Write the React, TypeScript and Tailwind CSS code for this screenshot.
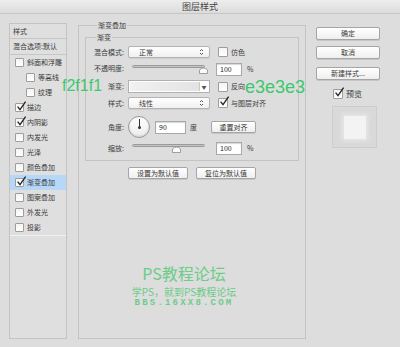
import React from "react";

function Check({ checked = false, box = "w-[9px] h-[9px]" }: { checked?: boolean; box?: string }) {
  return (
    <span className={`relative inline-block ${box} shrink-0 rounded-[1px] border border-[#9d9d9d] bg-gradient-to-b from-[#f4f4f4] to-white`}>
      {checked && (
        <svg className="absolute -top-[3px] left-0" width="11" height="11" viewBox="0 0 11 11">
          <path d="M1.6 5.6 L4 8.6 L9.6 0.6" stroke="#222" strokeWidth="1.3" fill="none" />
        </svg>
      )}
    </span>
  );
}

function Updown() {
  return (
    <svg width="5" height="8" viewBox="0 0 5 8" className="shrink-0">
      <path d="M1 3 L2.5 1.5 L4 3 M1 5 L2.5 6.5 L4 5" stroke="#444" strokeWidth="0.9" fill="none" />
    </svg>
  );
}

function Select({ value }: { value: string }) {
  return (
    <div className="flex h-[12px] w-[82px] items-center justify-between rounded-[2px] border border-[#b3b3b3] bg-gradient-to-b from-white to-[#f0f0f0] pl-[10px] pr-[5px] shadow-[0_1px_0_#cfcfcf]">
      <span className="leading-none">{value}</span>
      <Updown />
    </div>
  );
}

function Thumb() {
  return (
    <svg width="9" height="8" viewBox="0 0 9 8" className="absolute top-[0px]">
      <path d="M0.5 7.5 L0.5 4 Q4.5 0 8.5 4 L8.5 7.5 Z" fill="#fafafa" stroke="#8c8c8c" strokeWidth="0.8" />
    </svg>
  );
}

function Slider({ pos }: { pos: string }) {
  return (
    <div className="relative h-[13px] w-[82px] pl-[4px]">
      <div className="mt-[2px] h-[3px] w-[73px] rounded-full border border-[#9a9a9a] bg-[#c4c4c4]" />
      <div className={`absolute top-[1px] ${pos}`}>
        <Thumb />
      </div>
    </div>
  );
}

function Field({ value, w = "w-[26px]" }: { value: string; w?: string }) {
  return (
    <div className={`flex h-[13px] ${w} items-center border border-[#a9a9a9] bg-white pl-[3px] text-[7px] leading-none text-[#222] shadow-[inset_0_1px_1px_#d8d8d8]`}>
      {value}
    </div>
  );
}

function Btn({ label, w }: { label: string; w: string }) {
  return (
    <div className={`flex ${w} h-[12px] items-center justify-center rounded-[2px] border border-[#a5a5a5] bg-gradient-to-b from-white to-[#efefef] text-[7px] leading-none text-[#333] shadow-[0_1px_0_#c6c6c6]`}>
      {label}
    </div>
  );
}

const items: { name: string; checked?: boolean; indent?: boolean; active?: boolean }[] = [
  { name: "斜面和浮雕" },
  { name: "等高线", indent: true },
  { name: "纹理", indent: true },
  { name: "描边", checked: true },
  { name: "内阴影", checked: true },
  { name: "内发光" },
  { name: "光泽" },
  { name: "颜色叠加" },
  { name: "渐变叠加", checked: true, active: true },
  { name: "图案叠加" },
  { name: "外发光" },
  { name: "投影" },
];

export default function App() {
  return (
    <div className="relative h-[347px] w-[400px] overflow-hidden bg-[#dddddd] font-['Noto_Sans_CJK_SC',sans-serif] text-[7px] text-[#3a3a3a]">
      <div className="flex h-[14px] items-center justify-center border-b border-[#c6c6c6] bg-gradient-to-b from-[#ededed] to-[#dcdcdc] text-[9px] leading-none text-[#444]">
        图层样式
      </div>

      <div className="flex items-start">
        {/* style list */}
        <div className="ml-[9px] mt-[9px] h-[316px] w-[58px] border border-[#c3c3c3] bg-[#dfdfdf]">
          <div className="flex h-[15px] items-center border-b border-[#c6c6c6] pl-[3px] leading-none">样式</div>
          <div className="flex h-[16px] items-center border-b border-[#c6c6c6] pl-[3px] leading-none">混合选项:默认</div>
          {items.map((it) => (
            <div
              key={it.name}
              className={`flex h-[15px] items-center gap-[3px] leading-none ${it.indent ? "pl-[16px]" : "pl-[5px]"} ${it.active ? "bg-[#b6d7f6]" : ""}`}
            >
              <Check checked={it.checked} />
              <span>{it.name}</span>
            </div>
          ))}
          <div className="h-px bg-[#f2f2f2]" />
        </div>

        {/* main panel */}
        <fieldset className="ml-[11px] mt-[6px] h-[319px] w-[228px] border border-[#c3c3c3] px-[6px]">
          <legend className="ml-[12px] px-[1px] text-[7px] leading-[10px]">渐变叠加</legend>
          <fieldset className="mt-[2px] border border-[#c3c3c3] pb-[5px] pt-[4px]">
            <legend className="ml-[10px] px-[1px] text-[7px] leading-[10px]">渐变</legend>

            <div className="flex h-[12px] items-center">
              <span className="w-[38px] text-right leading-none">混合模式:</span>
              <div className="ml-[4px]"><Select value="正常" /></div>
              <div className="ml-[8px] flex items-center gap-[3px] leading-none">
                <Check box="w-[10px] h-[10px]" />
                <span>仿色</span>
              </div>
            </div>

            <div className="mt-[5px] flex h-[13px] items-start">
              <span className="mt-[2px] w-[38px] text-right leading-none">不透明度:</span>
              <div className="ml-[4px]"><Slider pos="left-[71px]" /></div>
              <div className="ml-[6px]"><Field value="100" /></div>
              <span className="ml-[5px] mt-[3px] leading-none">%</span>
            </div>

            <div className="mt-[4px] flex h-[13px] items-center">
              <span className="w-[38px] text-right leading-none">渐变:</span>
              <div className="ml-[4px] flex h-[13px] w-[82px] border border-[#b0b0b0] bg-white p-px">
                <div className="flex-1 bg-gradient-to-r from-[#f2f1f1] to-[#e3e3e3]" />
                <div className="flex w-[9px] items-center justify-center border-l border-[#c8c8c8] text-[5px] leading-none text-[#555]">▼</div>
              </div>
              <div className="ml-[8px] flex items-center gap-[3px] leading-none">
                <Check box="w-[10px] h-[10px]" />
                <span>反向</span>
              </div>
            </div>

            <div className="mt-[4px] flex h-[12px] items-center">
              <span className="w-[38px] text-right leading-none">样式:</span>
              <div className="ml-[4px]"><Select value="线性" /></div>
              <div className="ml-[8px] flex items-center gap-[3px] leading-none">
                <Check checked box="w-[10px] h-[10px]" />
                <span>与图层对齐</span>
              </div>
            </div>

            <div className="mt-[7px] flex h-[22px] items-center">
              <span className="w-[38px] text-right leading-none">角度:</span>
              <div className="ml-[4px] relative h-[22px] w-[22px] rounded-full border border-[#9a9a9a] bg-gradient-to-b from-white to-[#ececec] shadow-[inset_0_-1px_2px_#d0d0d0]">
                <div className="absolute left-[10px] top-[2px] h-[9px] w-px bg-[#333]" />
                <div className="absolute left-[9px] top-[9px] h-[3px] w-[3px] rounded-full bg-[#333]" />
              </div>
              <div className="ml-[5px]"><Field value="90" w="w-[31px]" /></div>
              <span className="ml-[4px] leading-none">度</span>
              <div className="ml-[14px]"><Btn label="重置对齐" w="w-[45px]" /></div>
            </div>

            <div className="mt-[4px] flex h-[13px] items-start">
              <span className="mt-[3px] w-[38px] text-right leading-none">缩放:</span>
              <div className="ml-[4px]"><Slider pos="left-[44px]" /></div>
              <div className="ml-[6px]"><Field value="100" /></div>
              <span className="ml-[5px] mt-[3px] leading-none">%</span>
            </div>
          </fieldset>

          <div className="mt-[6px] flex justify-center gap-[8px]">
            <Btn label="设置为默认值" w="w-[60px]" />
            <Btn label="复位为默认值" w="w-[60px]" />
          </div>
        </fieldset>

        {/* buttons */}
        <div className="ml-[10px] mt-[13px] flex flex-col">
          <div className="flex h-[13px] w-[64px] items-center justify-center rounded-[2px] border border-[#a5a5a5] bg-gradient-to-b from-white to-[#efefef] leading-none shadow-[0_1px_0_#c6c6c6]">确定</div>
          <div className="mt-[6px] flex h-[13px] w-[64px] items-center justify-center rounded-[2px] border border-[#a5a5a5] bg-gradient-to-b from-white to-[#efefef] leading-none shadow-[0_1px_0_#c6c6c6]">取消</div>
          <div className="mt-[8px] flex h-[13px] w-[64px] items-center justify-center rounded-[2px] border border-[#a5a5a5] bg-gradient-to-b from-white to-[#efefef] leading-none shadow-[0_1px_0_#c6c6c6]">新建样式...</div>
          <div className="ml-[17px] mt-[9px] flex items-center gap-[3px] leading-none">
            <Check checked box="w-[10px] h-[10px]" />
            <span className="text-[8px]">预览</span>
          </div>
          <div className="ml-[16px] mt-[7px] flex h-[42px] w-[45px] items-center justify-center border border-[#cdcdcd] bg-[#d9d9d9]">
            <div className="h-[23px] w-[22px] bg-[#f3f3f3] shadow-[0_0_4px_2px_#e6e6e6]" />
          </div>
        </div>
      </div>

      {/* annotations */}
      <div className="absolute left-[62px] top-[78px] font-['Liberation_Sans',sans-serif] text-[16px] leading-none text-[#3cc96d]">f2f1f1</div>
      <div className="absolute left-[245px] top-[78px] font-['Liberation_Sans',sans-serif] text-[18px] leading-none text-[#3cc96d]">e3e3e3</div>

      {/* watermark */}
      <div className="absolute left-[130px] top-[265px] w-[108px] text-center leading-none text-[#6ccc88]">
        <div className="text-[16px]">PS教程论坛</div>
        <div className="mt-[6px] text-[10px]">学PS，就到PS教程论坛</div>
        <div className="mt-[2px] font-['Liberation_Mono',monospace] text-[9px] font-bold tracking-[2.2px]">BBS.16XX8.COM</div>
      </div>
    </div>
  );
}
